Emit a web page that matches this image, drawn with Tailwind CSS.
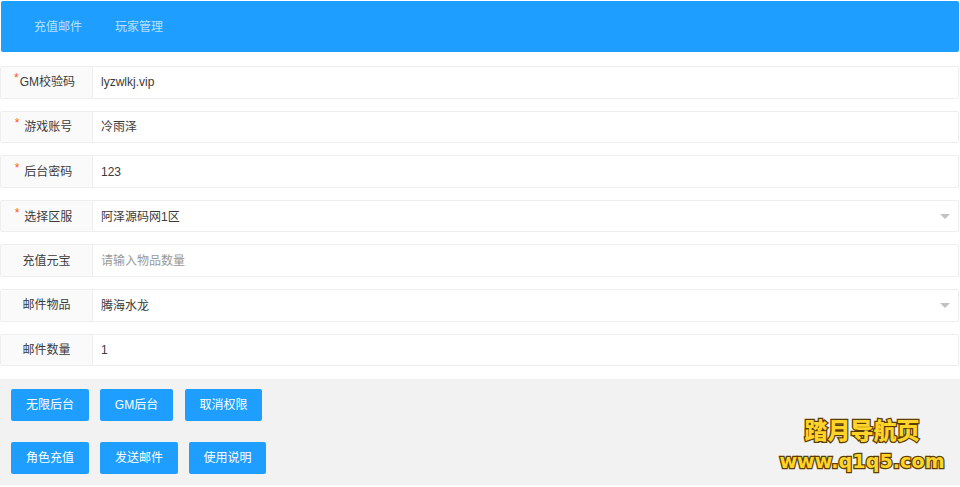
<!DOCTYPE html>
<html lang="zh-CN">
  <head>
    <meta charset="UTF-8" />
    <meta name="viewport" content="width=device-width, initial-scale=1.0" />
    <title>GM后台</title>
    <script src="https://cdn.jsdelivr.net/npm/@tailwindcss/browser@4"></script>
  </head>
  <body class="h-[487px] overflow-hidden bg-white text-[12px] text-[#3a3a3a] font-['Liberation_Sans','Noto_Sans_CJK_SC',sans-serif]">
    <!-- 顶部导航 -->
    <nav class="mx-px mt-px h-[51px] flex items-center gap-[33px] pl-[33px] rounded-[2px] bg-[#1e9fff] text-white/70">
      <a>充值邮件</a>
      <a>玩家管理</a>
    </nav>

    <form class="mt-[14px] flex flex-col gap-[12px] mr-px">
      <div class="flex h-[32.6px] border border-[#eee] rounded-[2px]">
        <label class="w-[92px] shrink-0 flex justify-center items-center pr-[4px] bg-[#fafafa] border-r border-[#eee]"><span class="relative top-[-4px] text-[#ff5722] mr-px">*</span>GM校验码</label>
        <div class="flex-1 flex items-center pl-[8px]">lyzwlkj.vip</div>
      </div>
      <div class="flex h-[32.6px] border border-[#eee] rounded-[2px]">
        <label class="w-[92px] shrink-0 flex justify-center items-center pr-[6px] bg-[#fafafa] border-r border-[#eee]"><span class="relative top-[-4px] text-[#ff5722] mr-[5px]">*</span>游戏账号</label>
        <div class="flex-1 flex items-center pl-[8px] pt-px">冷雨泽</div>
      </div>
      <div class="flex h-[32.6px] border border-[#eee] rounded-[2px]">
        <label class="w-[92px] shrink-0 flex justify-center items-center pr-[6px] pt-px bg-[#fafafa] border-r border-[#eee]"><span class="relative top-[-4px] text-[#ff5722] mr-[5px]">*</span>后台密码</label>
        <div class="flex-1 flex items-center pl-[8px] pt-px">123</div>
      </div>
      <div class="flex h-[32.6px] border border-[#eee] rounded-[2px]">
        <label class="w-[92px] shrink-0 flex justify-center items-center pr-[6px] pt-px bg-[#fafafa] border-r border-[#eee]"><span class="relative top-[-4px] text-[#ff5722] mr-[5px]">*</span>选择区服</label>
        <div class="flex-1 flex items-center justify-between pl-[8px] pr-[8px] pt-px">
          <span>阿泽源码网1区</span>
          <span class="w-0 h-0 border-x-[5px] border-t-[5px] border-x-transparent border-t-[#c2c2c2]"></span>
        </div>
      </div>
      <div class="flex h-[32.6px] border border-[#eee] rounded-[2px]">
        <label class="w-[92px] shrink-0 flex justify-center items-center bg-[#fafafa] border-r border-[#eee]">充值元宝</label>
        <div class="flex-1 flex items-center pl-[8px] text-[#999]">请输入物品数量</div>
      </div>
      <div class="flex h-[32.6px] border border-[#eee] rounded-[2px]">
        <label class="w-[92px] shrink-0 flex justify-center items-center bg-[#fafafa] border-r border-[#eee]">邮件物品</label>
        <div class="flex-1 flex items-center justify-between pl-[8px] pr-[8px] pt-px">
          <span>腾海水龙</span>
          <span class="w-0 h-0 border-x-[5px] border-t-[5px] border-x-transparent border-t-[#c2c2c2]"></span>
        </div>
      </div>
      <div class="flex h-[32.6px] border border-[#eee] rounded-[2px]">
        <label class="w-[92px] shrink-0 flex justify-center items-center bg-[#fafafa] border-r border-[#eee]">邮件数量</label>
        <div class="flex-1 flex items-center pl-[8px]">1</div>
      </div>
    </form>

    <!-- 按钮区 -->
    <section class="relative mt-[12.8px] h-[106px] bg-[#f2f2f2] pl-[11px] pt-[10px] flex flex-col gap-[20.5px] text-white">
      <div class="flex gap-[11px]">
        <button class="w-[78px] h-[32.5px] rounded-[2px] bg-[#1e9fff]">无限后台</button>
        <button class="w-[73px] h-[32.5px] rounded-[2px] bg-[#1e9fff]">GM后台</button>
        <button class="ml-px w-[77px] h-[32.5px] rounded-[2px] bg-[#1e9fff]">取消权限</button>
      </div>
      <div class="flex gap-[11px]">
        <button class="w-[78px] h-[32.5px] rounded-[2px] bg-[#1e9fff]">角色充值</button>
        <button class="w-[78px] h-[32.5px] rounded-[2px] bg-[#1e9fff]">发送邮件</button>
        <button class="w-[77px] h-[32.5px] rounded-[2px] bg-[#1e9fff]">使用说明</button>
      </div>
      <div class="absolute left-[777px] top-[37px] w-[170px] flex flex-col items-center font-black text-[#ffd42a] [-webkit-text-stroke:2.5px_#5a3d00] [paint-order:stroke_fill]">
        <div class="text-[23px] leading-[30px]">踏月导航页</div>
        <div class="text-[19.2px] leading-[31px] font-['DejaVu_Sans',sans-serif]">www.q1q5.com</div>
      </div>
    </section>
  </body>
</html>
